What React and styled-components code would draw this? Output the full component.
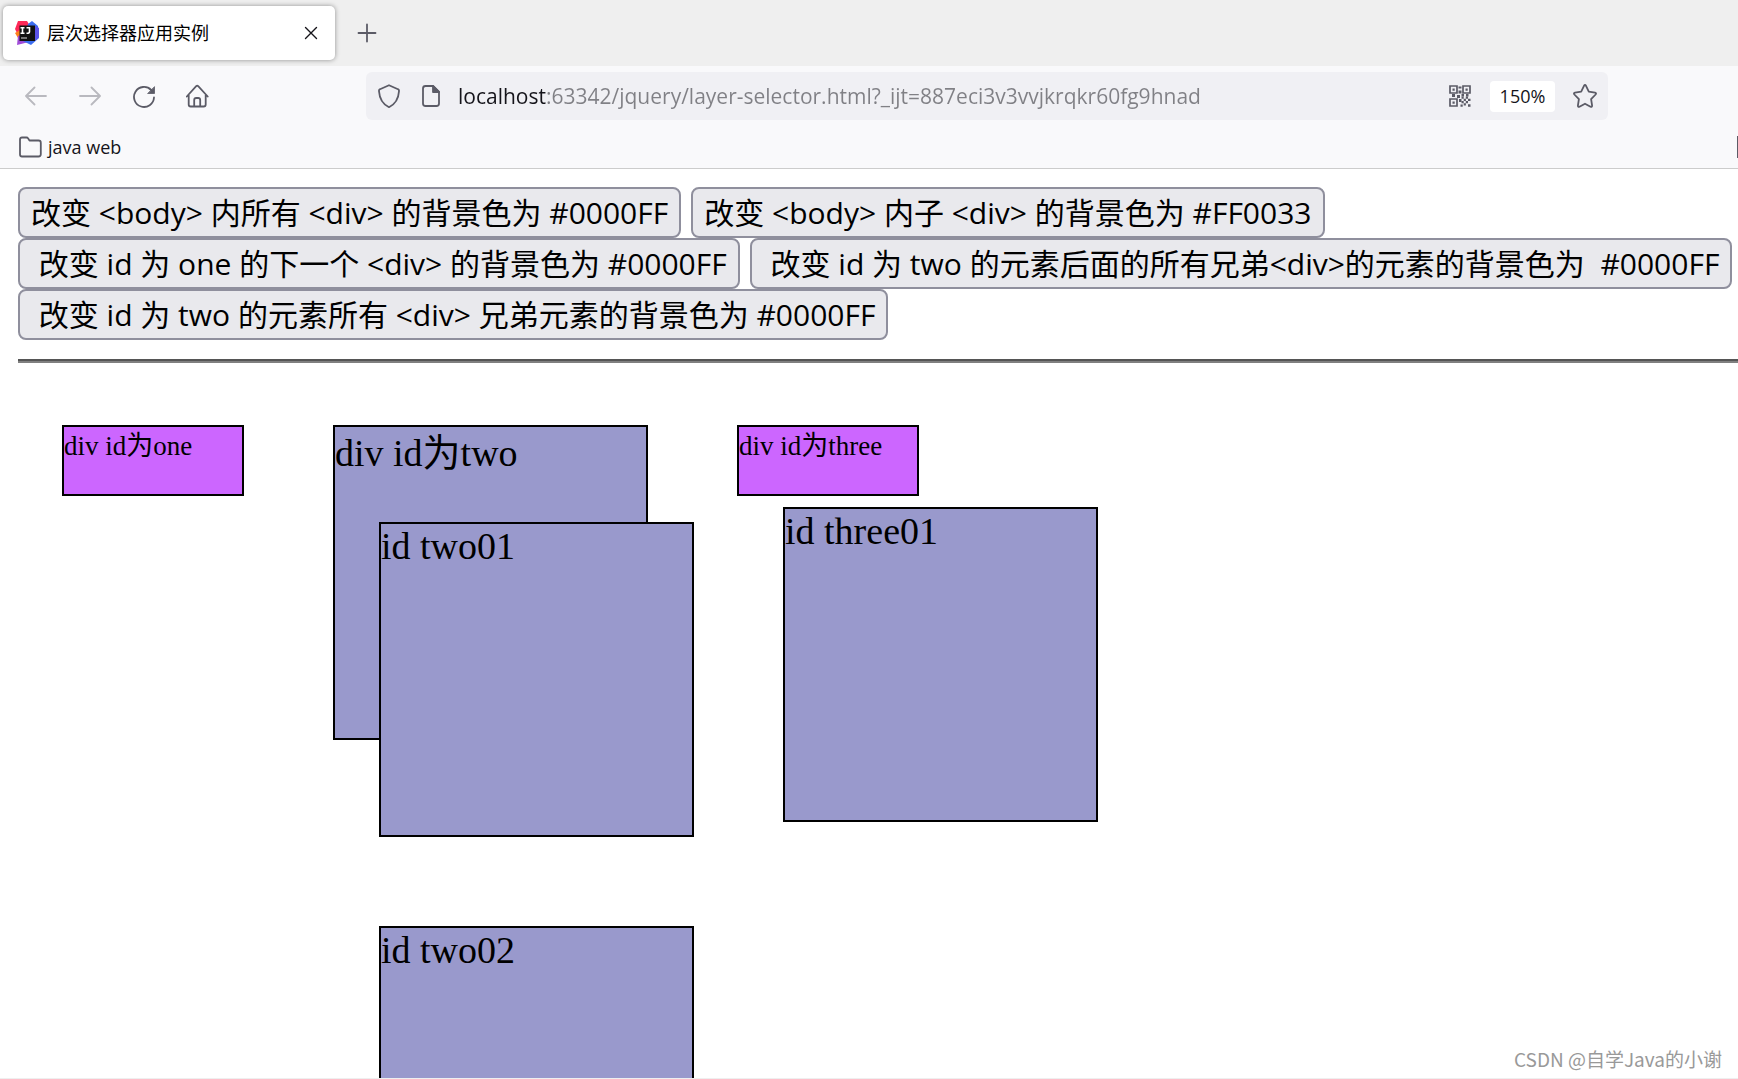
import React, { useState } from 'react'
import styled, { createGlobalStyle } from 'styled-components'

const GlobalStyle = createGlobalStyle`
    *, *::before, *::after {
        box-sizing: border-box;
    }
    body {
        margin: 0;
        background: #fff;
    }
`
const ui = `'Open Sans', 'Noto Sans CJK SC', sans-serif`

const Window = styled.div`
    display: flex;
    flex-direction: column;
    height: 100vh;
    overflow: hidden;
    position: relative;
    font-family: ${ui};
    color: #15141a;
    border-bottom: 1px solid #efefef;
`
const TabStrip = styled.div`
    display: flex;
    align-items: center;
    flex: none;
    height: 66px;
    padding-left: 3px;
    background: #efefef;
`
const Tab = styled.div`
    display: flex;
    align-items: center;
    width: 332px;
    height: 54px;
    padding: 0 12px;
    background: #fff;
    border-radius: 5px;
    box-shadow: 0 0 5px rgba(0, 0, 0, 0.4);
`
const TabTitle = styled.span`
    flex: 1;
    margin-left: 8px;
    font-size: 18px;
    line-height: 24px;
    color: #000;
`
const IconButton = styled.button`
    display: flex;
    align-items: center;
    justify-content: center;
    flex: none;
    width: 24px;
    height: 24px;
    padding: 0;
    border: 0;
    background: none;
    color: ${p => p.$color || '#5b5b66'};
    opacity: ${p => (p.disabled ? 0.4 : 1)};
`
const NewTab = styled(IconButton)`
    margin-left: 20px;
`
const Toolbar = styled.div`
    display: flex;
    align-items: center;
    flex: none;
    height: 60px;
    padding: 0 130px 0 24px;
    background: #f9f9fb;
`
const Nav = styled.nav`
    display: flex;
    gap: 30px;
    margin-right: 156px;
`
const UrlBar = styled.div`
    display: flex;
    align-items: center;
    flex: 1;
    min-width: 0;
    height: 48px;
    padding: 0 11px;
    gap: 15px;
    background: #f0f0f4;
    border-radius: 6px;
`
const UrlIcons = styled.div`
    display: flex;
    align-items: center;
    flex: none;
    gap: 18px;
`
/* host part is dark, the rest of the address is dimmed */
const UrlInput = styled.input`
    flex: 1;
    min-width: 0;
    height: 40px;
    padding: 0;
    border: 0;
    outline: 0;
    font-family: ${ui};
    font-size: 21px;
    color: transparent;
    background: linear-gradient(to right, #15141a 88px, #808085 88px);
    background-clip: text;
    -webkit-background-clip: text;
`
const Zoom = styled.button`
    width: 65px;
    height: 31px;
    padding: 0;
    border: 0;
    border-radius: 4px;
    background: #fff;
    color: #15141a;
    font-family: ${ui};
    font-size: 18px;
    line-height: 31px;
`
const Bookmarks = styled.div`
    display: flex;
    align-items: center;
    justify-content: space-between;
    flex: none;
    height: 43px;
    padding-left: 18px;
    background: #f9f9fb;
    border-bottom: 1px solid #ccc;
`
const Bookmark = styled.a`
    display: flex;
    align-items: center;
    gap: 6px;
    font-size: 18px;
    line-height: 24px;
    color: #15141a;
    text-decoration: none;
    svg {
        color: #5b5b66;
    }
`
const Overflow = styled.span`
    width: 1px;
    height: 22px;
    background: #5b5b66;
`
const Page = styled.main`
    flex: 1;
    min-height: 0;
    overflow: hidden;
    padding: 18px 0 0 18px;
`
const Actions = styled.div`
    display: flex;
    flex-wrap: wrap;
    column-gap: 10px;
`
const Action = styled.button`
    height: 51px;
    padding: 0 11px;
    border: 2px solid #8f8f9d;
    border-radius: 8px;
    background: #e9e9ed;
    color: #000;
    font-family: ${ui};
    font-size: 30px;
    line-height: 40px;
    white-space: pre;
`
const Rule = styled.hr`
    height: 4px;
    margin: 19px 0 18px;
    border: 0;
    border-top: 2px solid #555;
    background: #808080;
`
const Boxes = styled.div`
    display: flex;
    align-items: flex-start;
    gap: 89px;
    padding: 44px;
    font-family: 'Liberation Serif', 'Noto Sans CJK SC', serif;
    color: #000;
`
const Small = styled.div`
    flex: none;
    width: 182px;
    height: 71px;
    border: 2px solid #000;
    background: ${p => p.$bg || '#cc66ff'};
    font-size: 27px;
    line-height: 38px;
`
const Large = styled.div`
    flex: none;
    width: 315px;
    height: 315px;
    border: 2px solid #000;
    background: ${p => p.$bg || '#9999cc'};
    font-size: 38px;
    line-height: ${p => (p.$nested ? '44px' : '53px')};
`
const Children = styled.div`
    display: flex;
    flex-direction: column;
    gap: 89px;
    padding: 42px 44px 44px;
`
const Watermark = styled.div`
    position: absolute;
    right: 16px;
    bottom: 5px;
    font-size: 19px;
    line-height: 28px;
    color: #999;
    text-shadow: 1px 1px 0 #fff;
    font-family: 'Noto Sans CJK SC', sans-serif;
`

const Icon = ({ children, size = 24 }) => (
  <svg
    width={size} height={size} viewBox='0 0 24 24' fill='none'
    stroke='currentColor' strokeWidth='1.8' strokeLinecap='round' strokeLinejoin='round'
    aria-hidden='true'
  >
    {children}
  </svg>
)

const Favicon = () => (
  <svg width='24' height='24' viewBox='0 0 24 24' aria-hidden='true'>
    <path d='M3 0h9l3 5-3 8-9 1-3-6z' fill='#fe2857' />
    <path d='M0 12l5-3 4 6-6 2z' fill='#fc801d' />
    <path d='M3 15l6-2 5 8-12 3z' fill='#a04bd8' />
    <path d='M13 3l4-3 6 5 1 12-8 7-8-4z' fill='#3c6df0' />
    <path d='M20 5l4 2v9l-4 4z' fill='#5b53e8' />
    <rect x='4.500' y='4.500' width='15.500' height='15.500' fill='#111' />
    <path d='M5.500 6.800h4M7.500 6.800v5.400M5.500 12.200h4M11.500 6.800h3v4q0 1.600-3 1.400' fill='none' stroke='#fff' strokeWidth='1.600' />
    <path d='M6 17h6' stroke='#aaa' strokeWidth='1.300' />
  </svg>
)

const QrIcon = () => (
  <Icon>
    <g strokeWidth='1.700' strokeLinejoin='miter'>
      <path d='M2 2h7v7H2zM15 2h7v7h-7zM2 15h7v7H2z' />
    </g>
    <g fill='currentColor' stroke='none'>
      <path d='M4.500 4.500h2.200v2.200H4.500zM17.500 4.500h2.200v2.200h-2.200zM4.500 17.500h2.200v2.200H4.500z' />
      <path d='M10.500 2.500h3v2h-3zM10.500 6.500h3v3h-3zM4 10h3v3H4zM9 11h3v3H9zM13.500 10h2.500v2.500h-2.500zM18 10h2.500v2.500H18zM11 15h2.500v3H11z' />
      <path d='M13.500 12.500h2.200v2.200h-2.200zM17.800 12.500h2.200v2.200h-2.200zM15.700 14.700h2.200v2.200h-2.200zM20 14.700h2.500v2.200H20zM13.500 17h2.200v2.200h-2.200zM17.800 17h2.200v2.200h-2.200zM15.700 19.200h2.200v2.200h-2.200zM20 20.200h2.500v2.500H20zM12.500 20.500h2.200v2.200h-2.200z' />
    </g>
  </Icon>
)

const App = () => {
  const [url, setUrl] = useState('localhost:63342/jquery/layer-selector.html?_ijt=887eci3v3vvjkrqkr60fg9hnad')
  const [colors, setColors] = useState({})

  const paint = (ids, color) => {
    const next = { ...colors }
    ids.forEach(id => { next[id] = color })
    setColors(next)
  }

  return (
    <Window>
      <GlobalStyle />
      <TabStrip>
        <Tab>
          <Favicon />
          <TabTitle>层次选择器应用实例</TabTitle>
          <IconButton aria-label='Close tab' $color='#15141a'>
            <Icon><path d='M6.500 6.500l11 11M17.500 6.500l-11 11' strokeWidth='1.400' /></Icon>
          </IconButton>
        </Tab>
        <NewTab aria-label='New tab'>
          <Icon><path d='M12 3.500v17M3.500 12h17' /></Icon>
        </NewTab>
      </TabStrip>
      <Toolbar>
        <Nav>
          <IconButton aria-label='Back' disabled>
            <Icon><path d='M22 12H2.500M10.500 3.500L2 12l8.500 8.500' /></Icon>
          </IconButton>
          <IconButton aria-label='Forward' disabled>
            <Icon><path d='M2 12h19.500M13.500 3.500L22 12l-8.500 8.500' /></Icon>
          </IconButton>
          <IconButton aria-label='Reload'>
            <Icon>
              <path d='M22 13.500A10 10 0 1 1 19.200 6' />
              <path d='M22.500 3v6.500H16z' fill='currentColor' strokeWidth='0.800' />
            </Icon>
          </IconButton>
          <IconButton aria-label='Home'>
            <Icon>
              <path d='M.8 12.500L10.200 2.200q1-.9 2 0l9.500 10.300M2.700 11v9.500q0 2 2 2h13q2 0 2-2V11M8.200 22v-6q0-2 2-2h2q2 0 2 2v6' />
            </Icon>
          </IconButton>
        </Nav>
        <UrlBar>
          <UrlIcons>
            <IconButton aria-label='Tracking protection'>
              <Icon><path d='M12 1.200l9 4q1.200.5 1 2C21.500 14.500 18.500 20 12 23.200 5.500 20 2.500 14.500 2 7.200q-.2-1.500 1-2z' /></Icon>
            </IconButton>
            <IconButton aria-label='Site information'>
              <Icon>
                <path d='M14 2H6.500q-2.500 0-2.500 2.500v15Q4 22 6.500 22h11q2.500 0 2.500-2.500V8z' />
                <path d='M14 2v6h6z' fill='currentColor' />
              </Icon>
            </IconButton>
          </UrlIcons>
          <UrlInput aria-label='Address' value={url} onChange={e => setUrl(e.target.value)} spellCheck={false} />
          <UrlIcons>
            <IconButton aria-label='QR code'><QrIcon /></IconButton>
            <Zoom>150%</Zoom>
            <IconButton aria-label='Bookmark this page'>
              <Icon>
                <path d='M11 1.800q1-1.600 2 0l2.800 5.800 6.200 1q1.700.5.600 1.900l-4.500 4.700 1 6.400q0 1.700-1.600 1.100L12 19.700l-5.500 3q-1.600.6-1.600-1.100l1-6.400-4.500-4.700Q.3 9.100 2 8.600l6.200-1z' />
              </Icon>
            </IconButton>
          </UrlIcons>
        </UrlBar>
      </Toolbar>
      <Bookmarks>
        <Bookmark href='#java-web'>
          <Icon><path d='M2 19.500v-15Q2 2.500 4 2.500h4.500q1 0 1.500.8L11.500 5.500h9q2.300 0 2.300 2.300v11.500q0 2.200-2.300 2.200H4q-2 0-2-2z' /></Icon>
          java web
        </Bookmark>
        <Overflow />
      </Bookmarks>

      <Page>
        <Actions>
          <Action onClick={() => paint(['one', 'two', 'two01', 'two02', 'three', 'three01'], '#0000ff')}>
            {'改变 <body> 内所有 <div> 的背景色为 #0000FF'}
          </Action>
          <Action onClick={() => paint(['one', 'two', 'three'], '#ff0033')}>
            {'改变 <body> 内子 <div> 的背景色为 #FF0033'}
          </Action>
          <Action onClick={() => paint(['two'], '#0000ff')}>
            {' 改变 id 为 one 的下一个 <div> 的背景色为 #0000FF'}
          </Action>
          <Action onClick={() => paint(['three'], '#0000ff')}>
            {' 改变 id 为 two 的元素后面的所有兄弟<div>的元素的背景色为  #0000FF'}
          </Action>
          <Action onClick={() => paint(['one', 'three'], '#0000ff')}>
            {' 改变 id 为 two 的元素所有 <div> 兄弟元素的背景色为 #0000FF'}
          </Action>
        </Actions>
        <Rule />
        <Boxes>
          <Small $bg={colors.one}>div id为one</Small>
          <Large $bg={colors.two}>
            div id为two
            <Children>
              <Large $nested $bg={colors.two01}>id two01</Large>
              <Large $nested $bg={colors.two02}>id two02</Large>
            </Children>
          </Large>
          <Small $bg={colors.three}>
            div id为three
            <Children>
              <Large $nested $bg={colors.three01}>id three01</Large>
            </Children>
          </Small>
        </Boxes>
      </Page>
      <Watermark>CSDN @自学Java的小谢</Watermark>
    </Window>
  )
}

export default App
